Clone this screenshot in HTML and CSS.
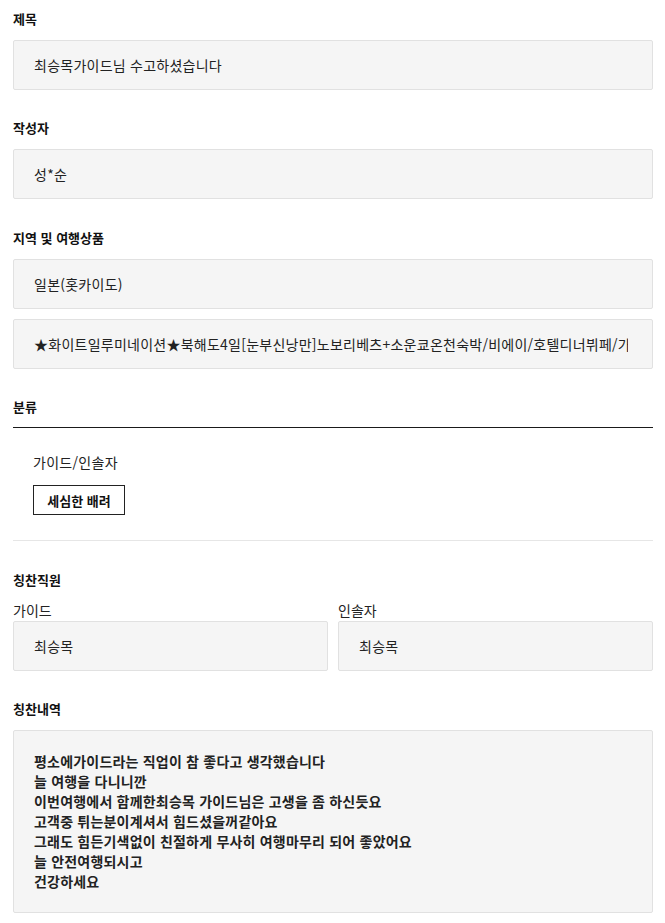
FILE: index.html
```html
<!DOCTYPE html>
<html lang="ko">
<head>
<meta charset="utf-8">
<title>칭찬 상세</title>
<link rel="stylesheet" href="styles.css">
</head>
<body>
<main class="form">
  <section class="field">
    <h3 class="label">제목</h3>
    <div class="box"><span class="value">최승목가이드님 수고하셨습니다</span></div>
  </section>

  <section class="field">
    <h3 class="label">작성자</h3>
    <div class="box"><span class="value">성*순</span></div>
  </section>

  <section class="field">
    <h3 class="label">지역 및 여행상품</h3>
    <div class="stack">
      <div class="box"><span class="value">일본(홋카이도)</span></div>
      <div class="box"><span class="value">★화이트일루미네이션★북해도4일[눈부신낭만]노보리베츠+소운쿄온천숙박/비에이/호텔디너뷔페/가니혼케</span></div>
    </div>
  </section>

  <section class="field category">
    <h3 class="label label-line">분류</h3>
    <div class="category-body">
      <p class="category-name">가이드/인솔자</p>
      <span class="tag">세심한 배려</span>
    </div>
  </section>

  <section class="field staff">
    <h3 class="label">칭찬직원</h3>
    <div class="staff-grid">
      <div class="staff-col">
        <p class="sublabel">가이드</p>
        <div class="box"><span class="value">최승목</span></div>
      </div>
      <div class="staff-col">
        <p class="sublabel">인솔자</p>
        <div class="box"><span class="value">최승목</span></div>
      </div>
    </div>
  </section>

  <section class="field">
    <h3 class="label">칭찬내역</h3>
    <div class="box box-text">평소에가이드라는 직업이 참 좋다고 생각했습니다<br>늘 여행을 다니니깐<br>이번여행에서 함께한최승목 가이드님은 고생을 좀 하신듯요<br>고객중 튀는분이계셔서 힘드셨을꺼같아요<br>그래도 힘든기색없이 친절하게 무사히 여행마무리 되어 좋았어요<br>늘 안전여행되시고<br>건강하세요</div>
  </section>
</main>
</body>
</html>
```

FILE: styles.css
```css
* { box-sizing: border-box; }

html, body {
  margin: 0;
  padding: 0;
  background: #fff;
}

body {
  font-family: "Noto Sans CJK KR", "Noto Sans", sans-serif;
  color: #222;
}

.form {
  width: 665px;
  padding: 8.5px 12px 0 13px;
}

.field {
  margin-bottom: 28.5px;
}

.label {
  margin: 0 0 11px;
  font-size: 13px;
  line-height: 20px;
  font-weight: 700;
  color: #111;
}

.box {
  height: 50px;
  display: flex;
  align-items: center;
  padding: 0 24px 0 20px;
  background: #f5f5f5;
  border: 1px solid #e1e1e1;
  border-radius: 2px;
  font-size: 14px;
  line-height: 20px;
  color: #222;
  letter-spacing: 0.25px;
}

.value {
  display: block;
  flex: 1;
  min-width: 0;
  white-space: nowrap;
  overflow: hidden;
}

.stack {
  display: flex;
  flex-direction: column;
  gap: 10px;
}

.label-line {
  padding-bottom: 10px;
  border-bottom: 1px solid #1a1a1a;
  margin-bottom: 0;
}

.category {
  border-bottom: 1px solid #e6e6e6;
  padding-bottom: 25px;
}

.category-body {
  padding: 24px 20px 0;
}

.category-name {
  margin: 0 0 13px;
  font-size: 14px;
  line-height: 20px;
  letter-spacing: 0.3px;
}

.tag {
  display: inline-flex;
  align-items: center;
  justify-content: center;
  width: 92px;
  height: 30px;
  border: 1px solid #222;
  font-size: 13px;
  font-weight: 700;
  color: #111;
}

.staff .label {
  margin-bottom: 10px;
}

.staff-grid {
  display: grid;
  grid-template-columns: 1fr 1fr;
  gap: 10px;
}

.sublabel {
  margin: 0 0 1px;
  font-size: 14px;
  line-height: 20px;
}

.box-text {
  height: auto;
  display: block;
  padding: 20px 20px 21px;
  font-weight: 700;
  letter-spacing: 0.2px;
}
```
